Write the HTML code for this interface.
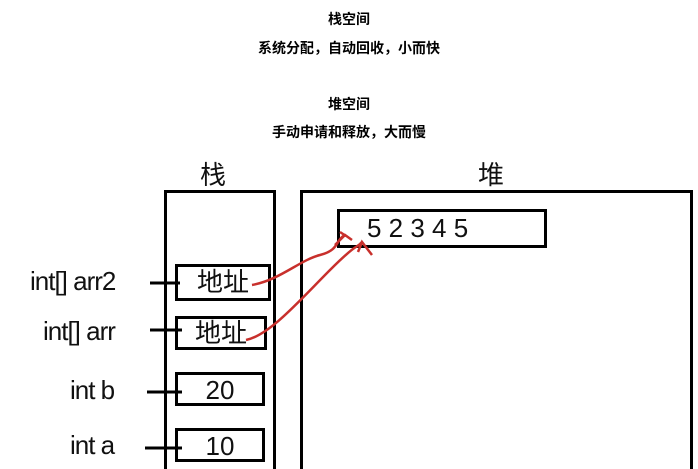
<html style="overflow:hidden"><head><style>
html,body{margin:0;width:698px;height:469px;overflow:hidden}
body{background:#fff;position:relative;font-family:"Liberation Sans","Noto Sans CJK SC",sans-serif;color:#111}
.t{position:absolute;left:0;width:698px;text-align:center;font-size:14px;font-weight:bold;color:#000}
.b{position:absolute;border:3px solid #000;box-sizing:border-box}
.l{position:absolute;font-size:26px;letter-spacing:-1px}
.v{position:absolute;font-size:26px;text-align:center;box-sizing:border-box}
</style></head><body>
<div class="t" style="top:9px">栈空间</div>
<div class="t" style="top:38px">系统分配，自动回收，小而快</div>
<div class="t" style="top:94px">堆空间</div>
<div class="t" style="top:122px">手动申请和释放，大而慢</div>
<div class="l" style="left:200px;top:155px">栈</div>
<div class="l" style="left:478px;top:155px">堆</div>
<div class="b" style="left:164px;top:190px;width:112px;height:290px"></div>
<div class="b" style="left:300px;top:190px;width:393px;height:290px"></div>
<div class="b v" style="left:337px;top:209px;width:210px;height:39px;text-align:left;padding-left:27px;line-height:33px">5 2 3 4 5</div>
<div class="b v" style="left:175px;top:264px;width:96px;height:37px;line-height:31px">地址</div>
<div class="b v" style="left:175px;top:316px;width:92px;height:34px;line-height:28px">地址</div>
<div class="b v" style="left:175px;top:372px;width:90px;height:34px;line-height:30px">20</div>
<div class="b v" style="left:175px;top:428px;width:90px;height:34px;line-height:30px">10</div>
<div class="l" style="left:30px;top:266px">int[] arr2</div>
<div class="l" style="left:43px;top:316px">int[] arr</div>
<div class="l" style="left:70px;top:375px">int b</div>
<div class="l" style="left:70px;top:430px">int a</div>
<svg width="698" height="469" style="position:absolute;left:0;top:0">
<g stroke="#000" stroke-width="3" fill="none">
<path d="M150 283H180"/><path d="M150 330H182"/><path d="M147 392H182"/><path d="M145 448H182"/>
</g>
<g stroke="#c8302c" stroke-width="2.5" fill="none">
<path d="M252 285C280 280 300 260 320 255S335 240 345 235"/>
<path d="M335 245L345 235L352 240M340 232L346 236"/>
<path d="M246 340C270 335 300 300 330 270S355 250 362 242"/>
<path d="M358 252L362 242L372 255"/>
</g>
</svg>
</body></html>
